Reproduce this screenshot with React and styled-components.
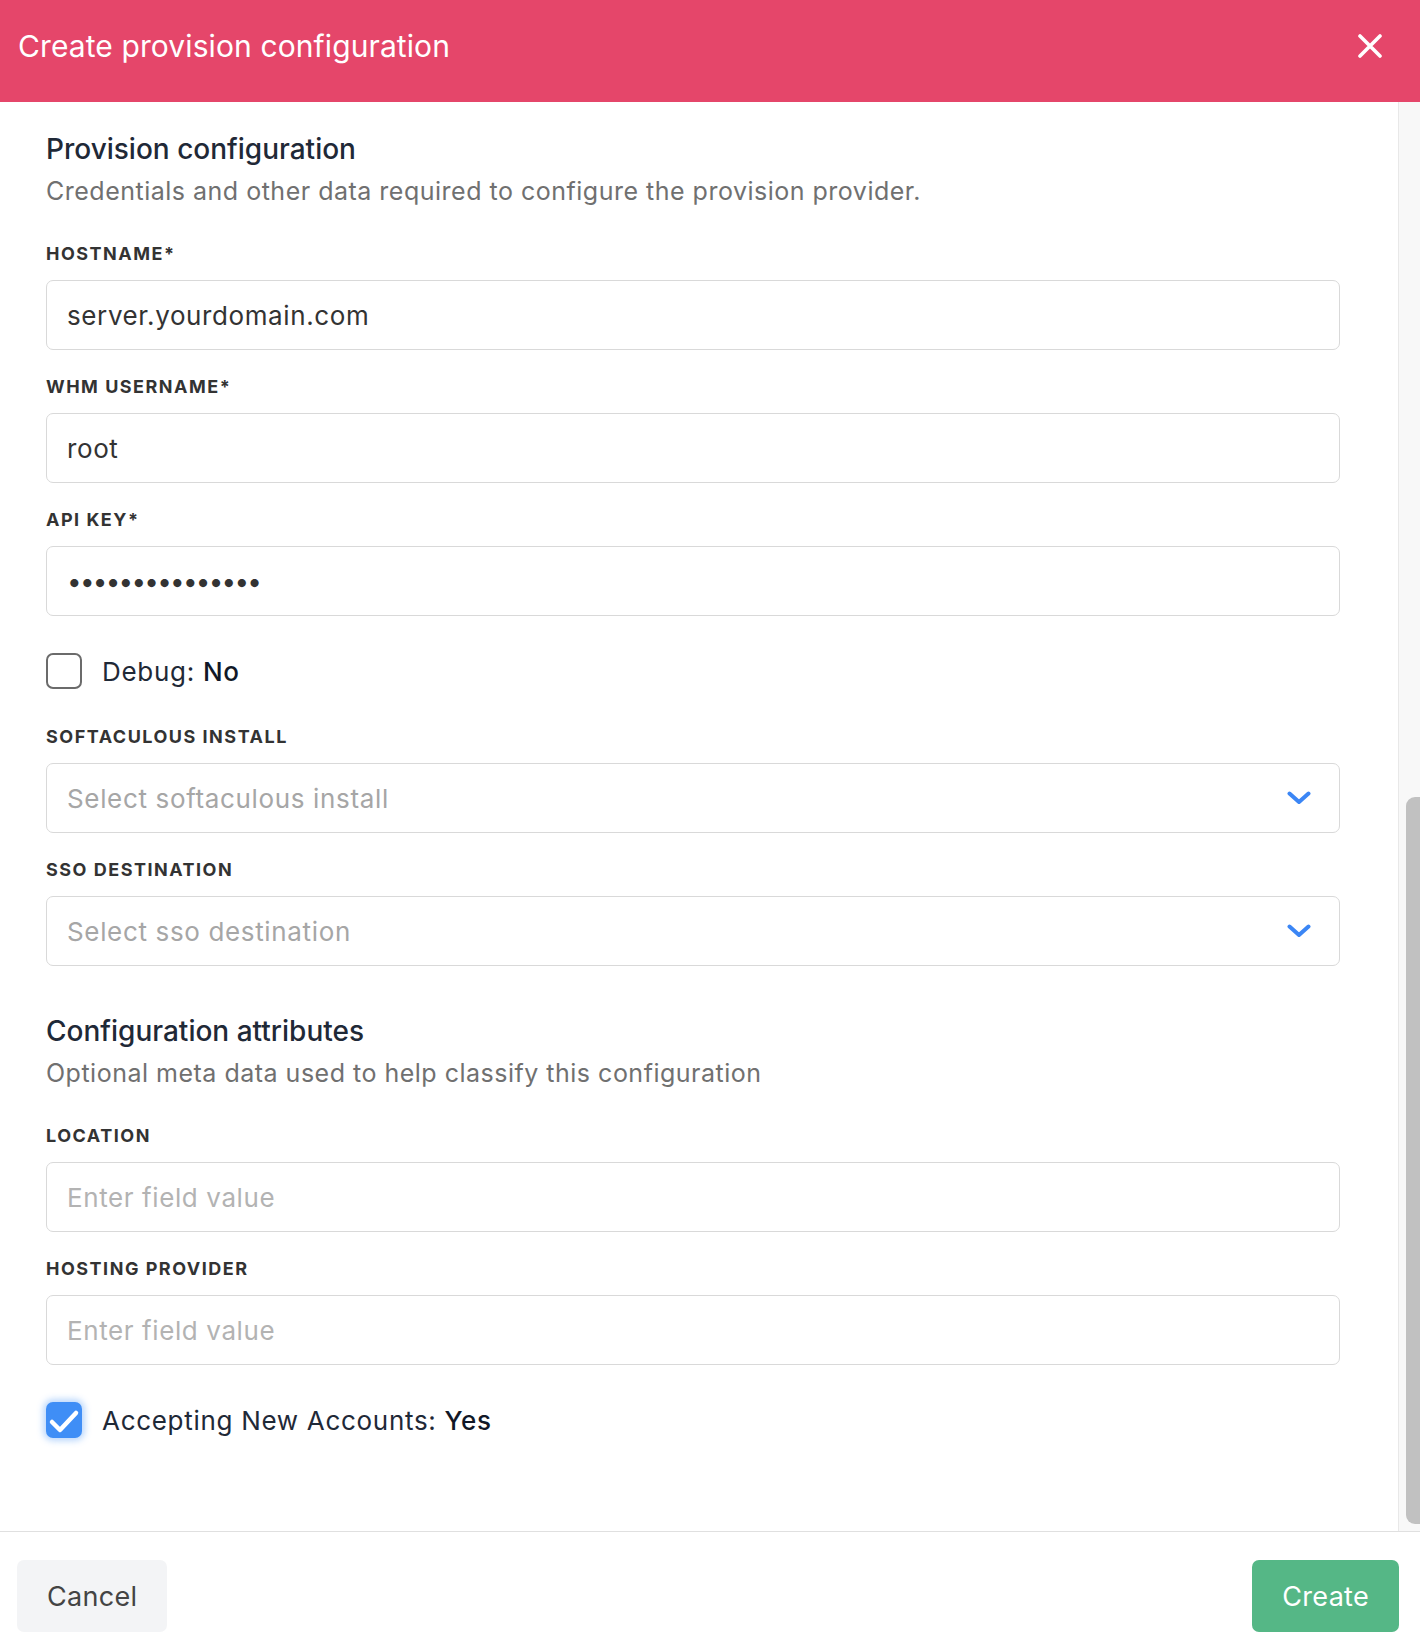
import React from 'react'
import styled, { createGlobalStyle } from 'styled-components'

const GlobalStyle = createGlobalStyle`
    html, body {
        margin: 0;
        padding: 0;
        background: #fff;
    }
    body {
        font-family: Inter, "Noto Sans", sans-serif;
        -webkit-font-smoothing: antialiased;
    }
`

const Modal = styled.div`
    display: flex;
    flex-direction: column;
    height: 100vh;
    width: 100%;
    overflow: hidden;
`

const Header = styled.div`
    display: flex;
    align-items: center;
    justify-content: space-between;
    height: 102px;
    box-sizing: border-box;
    flex-shrink: 0;
    padding: 0 38px 10px 18px;
    background: #e5466a;
    color: #fff;
`

const Title = styled.h1`
    margin: 0;
    font-size: 30px;
    font-weight: 400;
    letter-spacing: 0.1px;
`

const CloseButton = styled.button`
    display: flex;
    align-items: center;
    justify-content: center;
    padding: 0;
    border: none;
    background: none;
    cursor: pointer;
`

const BodyRow = styled.div`
    display: flex;
    flex: 1;
    min-height: 0;
`

const Content = styled.div`
    flex: 1;
    display: flex;
    flex-direction: column;
    padding: 29px 58px 0 46px;
`

const ScrollTrack = styled.div`
    width: 21px;
    flex-shrink: 0;
    display: flex;
    flex-direction: column;
    background: #f8f8f8;
    border-left: 1px solid #e8e8e8;
    overflow: hidden;
`

const ScrollThumb = styled.div`
    margin-top: auto;
    margin-bottom: 7px;
    margin-left: 7px;
    width: 22px;
    height: 727px;
    border-radius: 9px;
    background: #c1c1c1;
`

const Section = styled.section`
    display: flex;
    flex-direction: column;
    & + & {
        margin-top: 47px;
    }
`

const SectionTitle = styled.h2`
    margin: 0;
    font-size: 28px;
    line-height: 36px;
    font-weight: 500;
    color: #1f2937;
`

const SectionDesc = styled.p`
    margin: 8px 0 0;
    font-size: 25px;
    line-height: 32px;
    letter-spacing: 0.5px;
    color: #707070;
`

const Fields = styled.div`
    display: flex;
    flex-direction: column;
    gap: 25px;
    margin-top: 35px;
`

const Field = styled.div`
    display: flex;
    flex-direction: column;
`

const Label = styled.label`
    font-size: 18px;
    line-height: 24px;
    font-weight: 700;
    letter-spacing: 1.5px;
    text-transform: uppercase;
    color: #333;
    margin-bottom: 14px;
`

const Input = styled.input`
    box-sizing: border-box;
    height: 70px;
    width: 100%;
    padding: 0 20px;
    border: 1px solid #d9d9d9;
    border-radius: 7px;
    font-family: inherit;
    font-size: 26px;
    color: #333;
    background: #fff;
    outline: none;
    letter-spacing: ${props => props.type === 'password' ? '-1.75px' : '0.6px'};

    &::placeholder {
        color: #b3b3b3;
    }
`

const SelectBox = styled.div`
    box-sizing: border-box;
    display: flex;
    align-items: center;
    justify-content: space-between;
    height: 70px;
    padding: 0 28px 0 20px;
    border: 1px solid #d9d9d9;
    border-radius: 7px;
    font-size: 26px;
    letter-spacing: 0.65px;
    color: #a6a6a6;
    cursor: pointer;
`

const CheckRow = styled.label`
    display: flex;
    align-items: center;
    gap: 20px;
    height: 36px;
    margin: 12px 0 11px;
    font-size: 26px;
    letter-spacing: 0.7px;
    color: #1f2937;
    cursor: pointer;
`

const Box = styled.span`
    box-sizing: border-box;
    width: 36px;
    height: 36px;
    display: flex;
    align-items: center;
    justify-content: center;
    border-radius: 7px;
    border: ${props => props.checked ? 'none' : '2px solid #6b6b6b'};
    background: ${props => props.checked ? '#3f8ef6' : '#fff'};
    box-shadow: ${props => props.checked ? '0 0 6px 3px rgba(63, 142, 246, 0.35)' : 'none'};
`

const Value = styled.span`
    font-weight: 500;
    color: #111827;
`

const Footer = styled.div`
    display: flex;
    justify-content: space-between;
    align-items: flex-start;
    flex-shrink: 0;
    height: 119px;
    box-sizing: border-box;
    padding: 28px 21px 0 17px;
    border-top: 1px solid #e0e0e0;
`

const Button = styled.button`
    height: 72px;
    padding: 0 30px;
    border: none;
    border-radius: 7px;
    font-family: inherit;
    font-size: 27px;
    letter-spacing: 0.3px;
    background: ${props => props.primary ? '#55b786' : '#f3f4f6'};
    color: ${props => props.primary ? '#fff' : '#444'};
    cursor: pointer;
`

function Chevron() {
    return (
        <svg width="24" height="14" viewBox="0 0 24 14" fill="none">
            <path d="M2.5 2.5 L12 11 L21.5 2.5" stroke="#3b86f5" strokeWidth="4" strokeLinecap="round" strokeLinejoin="round" />
        </svg>
    )
}

function Checkbox({ checked, label, value }) {
    return (
        <CheckRow>
            <Box checked={checked}>
                {checked && (
                    <svg width="36" height="36" viewBox="0 0 36 36" fill="none">
                        <path d="M6 20 L14 28 L30 11" stroke="#fff" strokeWidth="4.5" strokeLinecap="round" strokeLinejoin="round" />
                    </svg>
                )}
            </Box>
            <span>{label}: <Value>{value}</Value></span>
        </CheckRow>
    )
}

function TextField({ label, ...rest }) {
    return (
        <Field>
            <Label>{label}</Label>
            <Input readOnly {...rest} />
        </Field>
    )
}

function SelectField({ label, placeholder }) {
    return (
        <Field>
            <Label>{label}</Label>
            <SelectBox>
                <span>{placeholder}</span>
                <Chevron />
            </SelectBox>
        </Field>
    )
}

export default function App() {
    return (
        <Modal>
            <GlobalStyle />
            <Header>
                <Title>Create provision configuration</Title>
                <CloseButton aria-label="Close">
                    <svg width="24" height="24" viewBox="0 0 24 24" fill="none">
                        <path d="M2 2 L22 22 M22 2 L2 22" stroke="#fff" strokeWidth="3.6" strokeLinecap="round" />
                    </svg>
                </CloseButton>
            </Header>
            <BodyRow>
                <Content>
                    <Section>
                        <SectionTitle>Provision configuration</SectionTitle>
                        <SectionDesc>Credentials and other data required to configure the provision provider.</SectionDesc>
                        <Fields>
                            <TextField label="Hostname*" value="server.yourdomain.com" />
                            <TextField label="WHM Username*" value="root" />
                            <TextField label="API Key*" type="password" value="abcdefghijklmno" />
                            <Checkbox label="Debug" value="No" />
                            <SelectField label="Softaculous install" placeholder="Select softaculous install" />
                            <SelectField label="SSO destination" placeholder="Select sso destination" />
                        </Fields>
                    </Section>
                    <Section>
                        <SectionTitle>Configuration attributes</SectionTitle>
                        <SectionDesc>Optional meta data used to help classify this configuration</SectionDesc>
                        <Fields>
                            <TextField label="Location" placeholder="Enter field value" />
                            <TextField label="Hosting provider" placeholder="Enter field value" />
                            <Checkbox checked label="Accepting New Accounts" value="Yes" />
                        </Fields>
                    </Section>
                </Content>
                <ScrollTrack>
                    <ScrollThumb />
                </ScrollTrack>
            </BodyRow>
            <Footer>
                <Button>Cancel</Button>
                <Button primary>Create</Button>
            </Footer>
        </Modal>
    )
}
